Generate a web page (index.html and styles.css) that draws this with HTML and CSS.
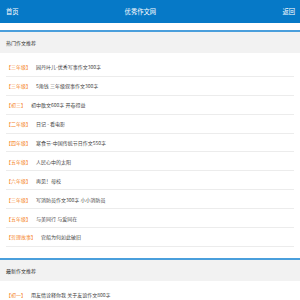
FILE: index.html
```html
<!DOCTYPE html>
<html lang="zh">
<head>
<meta charset="utf-8">
<title>优秀作文网</title>
<link rel="stylesheet" href="styles.css">
</head>
<body>
<header class="top">
  <a class="top-link" href="#">首页</a>
  <span class="top-title">优秀作文网</span>
  <a class="top-link top-back" href="#">返回</a>
</header>

<section class="sec">
  <div class="sec-head">热门作文推荐</div>
  <ul class="list">
    <li class="item"><span class="tag">【三年级】</span><a class="ttl" href="#">园丹叶儿-优秀写事作文300字</a></li>
    <li class="item"><span class="tag">【三年级】</span><a class="ttl" href="#">5角钱 三年级叙事作文300字</a></li>
    <li class="item"><span class="tag">【初三】</span><a class="ttl" href="#">初中散文600字 开卷得益</a></li>
    <li class="item"><span class="tag">【二年级】</span><a class="ttl" href="#">日记 - 看电影</a></li>
    <li class="item"><span class="tag">【四年级】</span><a class="ttl" href="#">寒食节-中国传统节日作文550字</a></li>
    <li class="item"><span class="tag">【五年级】</span><a class="ttl" href="#">人民心中的太阳</a></li>
    <li class="item"><span class="tag">【六年级】</span><a class="ttl" href="#">再见！母校</a></li>
    <li class="item"><span class="tag">【三年级】</span><a class="ttl" href="#">写消防员作文300字 小小消防员</a></li>
    <li class="item"><span class="tag">【五年级】</span><a class="ttl" href="#">与美同行 与爱同在</a></li>
    <li class="item"><span class="tag">【哲理故事】</span><a class="ttl" href="#">官船为何如此破旧</a></li>
  </ul>
</section>

<section class="sec sec-next">
  <div class="sec-head">最新作文推荐</div>
  <ul class="list">
    <li class="item"><span class="tag">【初一】</span><a class="ttl" href="#">用友情诠释你我 关于友谊作文800字</a></li>
  </ul>
</section>
</body>
</html>
```

FILE: styles.css
```css
html, body {
  margin: 0;
  padding: 0;
  background: #ffffff;
  font-family: "Noto Sans CJK SC", "Noto Sans", sans-serif;
}

a {
  text-decoration: none;
  color: inherit;
}

.top {
  height: 23px;
  background: #0679c7;
  color: #ffffff;
  display: flex;
  align-items: center;
  padding: 0 5px 0 6px;
  font-size: 6.3px;
}

.top-title {
  margin-left: 106px;
}

.top-back {
  margin-left: auto;
}

.sec {
  margin-top: 7px;
}

.sec-next {
  margin-top: 6px;
}

.sec-head {
  border-top: 2px solid #4a9fdc;
  background: #f2f2f2;
  height: 21px;
  line-height: 21px;
  padding-left: 6px;
  font-size: 5px;
  color: #333333;
}

.list {
  list-style: none;
  margin: 0;
  padding: 5px 6px;
}

.item {
  box-sizing: border-box;
  height: 18.9px;
  border-bottom: 1px solid #ececec;
  display: flex;
  align-items: center;
  font-size: 5px;
}

.tag {
  color: #f5861f;
  margin-right: 5px;
}

.ttl {
  color: #444444;
}
```
